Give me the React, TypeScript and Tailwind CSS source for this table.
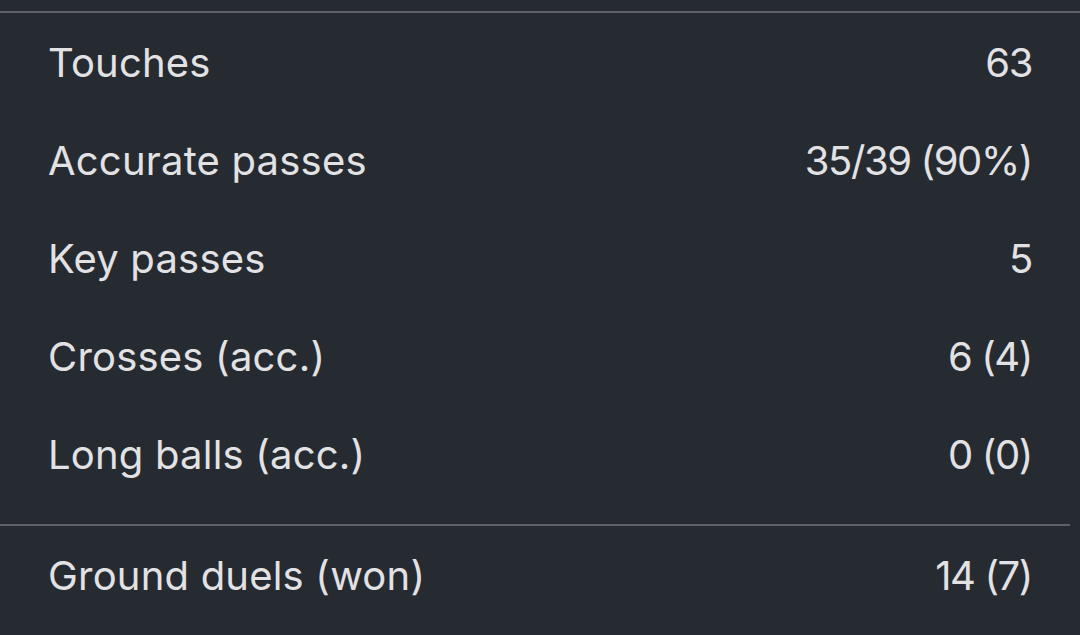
const rows: [string, string][] = [
  ["Touches", "63"],
  ["Accurate passes", "35/39 (90%)"],
  ["Key passes", "5"],
  ["Crosses (acc.)", "6 (4)"],
  ["Long balls (acc.)", "0 (0)"],
];

function StatRow({ label, value }: { label: string; value: string }) {
  return (
    <div className="flex h-[98px] items-center justify-between pl-[48px] pr-[48px]">
      <span className="tracking-[0.005em]">{label}</span>
      <span className="tracking-[-0.035em]">{value}</span>
    </div>
  );
}

export default function App() {
  return (
    <div
      className="h-[635px] w-[1080px] overflow-hidden bg-[#262a31] text-[40px] leading-none text-[#e2e2e4]"
      style={{ fontFamily: 'Inter, "Liberation Sans", sans-serif' }}
    >
      <div className="mt-[11px] h-[2px] bg-[#5d6066]" />
      <div className="pb-[20px] pt-[1px]">
        {rows.map(([label, value]) => (
          <StatRow key={label} label={label} value={value} />
        ))}
      </div>
      <div className="mr-[10px] h-[2px] bg-[#5d6066]" />
      <div className="pt-[1px]">
        <StatRow label="Ground duels (won)" value="14 (7)" />
      </div>
    </div>
  );
}
